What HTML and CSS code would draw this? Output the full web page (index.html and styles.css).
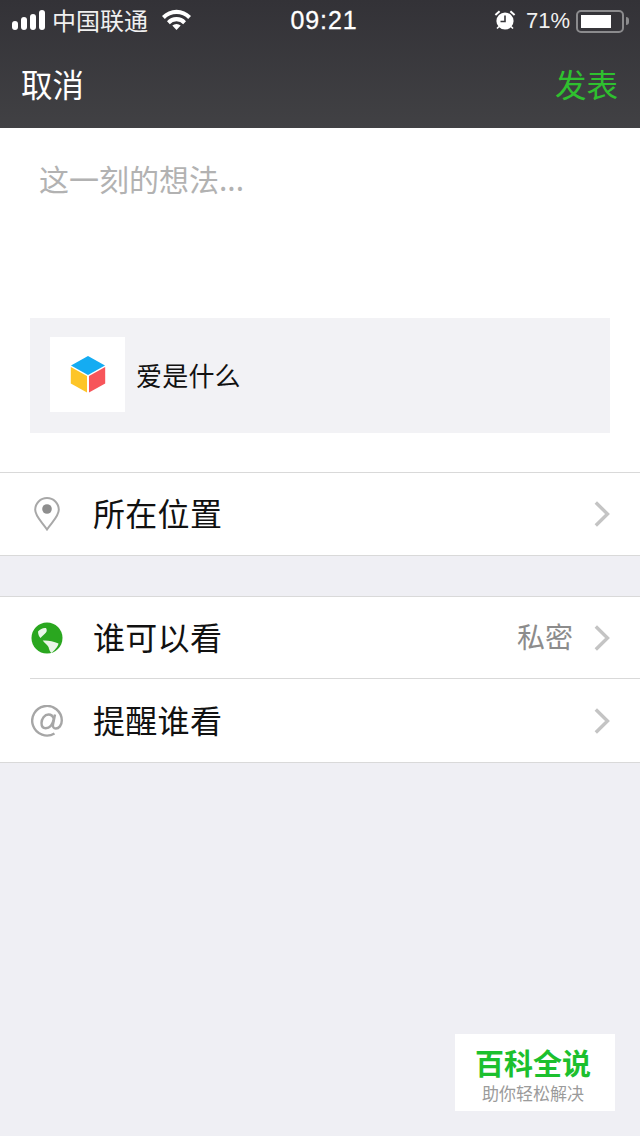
FILE: index.html
```html
<!DOCTYPE html>
<html lang="zh-CN">
<head>
<meta charset="utf-8">
<title>发表</title>
<link rel="stylesheet" href="styles.css">
</head>
<body>
<div class="phone">
  <header class="top">
    <div class="status">
      <div class="status-left">
        <div class="signal"><i class="b1"></i><i class="b2"></i><i class="b3"></i><i class="b4"></i></div>
        <span class="carrier">中国联通</span>
        <svg class="wifi" width="29" height="22" viewBox="0 0 29 22"><path d="M14.500 21 10.300 16.600A6 6 0 0 1 18.700 16.600Z" fill="#fff"/><path d="M5 12.200A13 13 0 0 1 24 12.200L21.200 15.200A9 9 0 0 0 7.800 15.200Z" fill="#fff"/><path d="M0 7A20.200 20.200 0 0 1 29 7L26.200 10A16 16 0 0 0 2.800 10Z" fill="#fff"/></svg>
      </div>
      <span class="clock">09:21</span>
      <div class="status-right">
        <svg class="alarm" width="22" height="22" viewBox="0 0 22 22"><circle cx="11" cy="12" r="8.600" fill="#fff"/><path d="M11 6.500V12.500H6.500" fill="none" stroke="#37363a" stroke-width="1.600"/><path d="M1.400 6 5.600 2.200M20.600 6 16.400 2.200" stroke="#fff" stroke-width="2" fill="none"/><path d="M3 19.500 5 17.500M19 19.500 17 17.500" stroke="#fff" stroke-width="1.600"/></svg>
        <span class="percent">71%</span>
        <div class="battery"><div class="battery-fill"></div></div>
        <div class="battery-cap"></div>
      </div>
    </div>
    <nav class="nav">
      <span class="cancel">取消</span>
      <span class="post">发表</span>
    </nav>
  </header>

  <section class="composer">
    <p class="placeholder">这一刻的想法...</p>
    <div class="link-card">
      <div class="thumb">
        <svg class="cube" width="36" height="38" viewBox="0 0 36 38"><path d="M18 1 35 10.500 18 20 1 10.500Z" fill="#14acf2"/><path d="M.8 12 17 21V37.500L.8 28.500Z" fill="#fdc528"/><path d="M35.200 12 19 21V37.500L35.200 28.500Z" fill="#f7555a"/></svg>
      </div>
      <span class="link-title">爱是什么</span>
    </div>
  </section>

  <ul class="group group-location">
    <li class="row">
      <span class="row-icon">
        <svg width="26" height="34" viewBox="0 0 26 34"><path d="M13 32.500C8 25 1.200 19.500 1.200 12.800a11.800 11.800 0 0 1 23.600 0C24.800 19.500 18 25 13 32.500Z" fill="none" stroke="#a8a8a8" stroke-width="2"/><circle cx="13" cy="12" r="4.800" fill="#8e8e8e"/></svg>
      </span>
      <span class="row-label">所在位置</span>
      <svg class="chevron" width="16" height="26" viewBox="0 0 16 26"><path d="M1.800 1.500 13.500 13 1.800 24.500" fill="none" stroke="#c4c4c4" stroke-width="3.400"/></svg>
    </li>
  </ul>

  <ul class="group group-share">
    <li class="row row-divided">
      <span class="row-icon">
        <svg width="32" height="32" viewBox="0 0 32 32"><circle cx="16" cy="16" r="15.500" fill="#2aa71f"/><path d="M7 9.500C9.500 7 12 5.500 15 6c1 1.500 1 3 0 4.500-2 2.500-3.500 3-5.500 5.500C8 14.500 7 12 7 9.500Z" fill="#e9f6e7"/><path d="M11.700 18.500C16 18 22 19 27.500 21.500c-.5 2-1.500 4.500-7 9.500-1.500-1-2.500-4-3-6C16 22.500 13.500 21 11.700 18.500Z" fill="#e9f6e7"/></svg>
      </span>
      <span class="row-label">谁可以看</span>
      <span class="row-value">私密</span>
      <svg class="chevron" width="16" height="26" viewBox="0 0 16 26"><path d="M1.800 1.500 13.500 13 1.800 24.500" fill="none" stroke="#c4c4c4" stroke-width="3.400"/></svg>
    </li>
    <li class="row">
      <span class="row-icon">
        <svg width="32" height="32" viewBox="0 0 32 32"><path d="M23.500 28.500A14.800 14.800 0 1 1 30.800 15.500c0 5-3 8-6 8-2.200 0-3.200-1.500-2.800-4L24 9.500" fill="none" stroke="#a6a6a6" stroke-width="2.400"/><path d="M22.800 14c-.8-3-2.800-4.500-5.300-4.500-4 0-7 4.500-7 8.500 0 3.300 1.700 5.300 4.200 5.300 3.500 0 6.800-3.500 8.100-9.300Z" fill="none" stroke="#a6a6a6" stroke-width="2.400"/></svg>
      </span>
      <span class="row-label">提醒谁看</span>
      <svg class="chevron" width="16" height="26" viewBox="0 0 16 26"><path d="M1.800 1.500 13.500 13 1.800 24.500" fill="none" stroke="#c4c4c4" stroke-width="3.400"/></svg>
    </li>
  </ul>

  <aside class="badge">
    <strong class="badge-name">百科全说</strong>
    <span class="badge-line">助你轻松解决</span>
  </aside>
</div>
</body>
</html>
```
FILE: styles.css
```css
* { box-sizing: border-box; }

html, body {
  margin: 0;
  padding: 0;
}

body {
  font-family: "Noto Sans CJK SC", "Liberation Sans", sans-serif;
  background: #efeff4;
}

.phone {
  position: relative;
  width: 640px;
  height: 1136px;
  overflow: hidden;
  background: #efeff4;
}

/* Dark header: status bar and navigation */
.top {
  height: 128px;
  background: linear-gradient(#333237, #414144);
  color: #fff;
}

.status {
  height: 42px;
  padding: 0 11px 0 12px;
  display: grid;
  grid-template-columns: 1fr auto 1fr;
  align-items: center;
}

.status-left,
.status-right {
  display: flex;
  align-items: center;
}

.status-right { justify-content: flex-end; }

.signal {
  display: flex;
  align-items: flex-end;
  gap: 3px;
  height: 20px;
  margin-bottom: 2px;
}

.signal i {
  display: block;
  width: 6px;
  background: #fff;
  border-radius: 3px;
}

.b1 { height: 9px; }
.b2 { height: 13px; }
.b3 { height: 16px; }
.b4 { height: 20px; }

.carrier {
  margin-left: 7px;
  padding-bottom: 3px;
  font-size: 24px;
  line-height: 30px;
  color: #f0f0f0;
}

.wifi { margin-left: 14px; margin-bottom: 2px; }

.clock {
  padding: 0 0 1px 7px;
  font-family: "Liberation Sans", sans-serif;
  font-size: 25px;
  font-weight: 400;
  letter-spacing: .9px;
  -webkit-text-stroke: .3px #fff;
}

.alarm { margin-top: -2px; }

.percent {
  margin-left: 10px;
  font-family: "Liberation Sans", sans-serif;
  font-size: 22px;
  color: #f0f0f0;
}

.battery {
  margin-left: 6px;
  width: 48px;
  height: 23px;
  padding: 3px;
  border: 2px solid #8b8b8d;
  border-radius: 5px;
}

.battery-fill {
  width: 30px;
  height: 100%;
  background: #fff;
}

.battery-cap {
  width: 3px;
  height: 8px;
  margin-left: 2px;
  background: #8b8b8d;
  border-radius: 0 3px 3px 0;
}

.nav {
  height: 86px;
  padding: 0 22px 4px 21px;
  display: flex;
  align-items: center;
  justify-content: space-between;
  font-size: 31.500px;
}

.post { color: #2fc02f; }

/* Post text area with shared link */
.composer {
  height: 344px;
  padding: 28px 30px 0;
  background: #fff;
}

.placeholder {
  margin: 0;
  height: 162px;
  padding-left: 9px;
  font-size: 30px;
  line-height: 44px;
  color: #b2b2b2;
}

.link-card {
  height: 115px;
  padding: 0 20px;
  display: flex;
  align-items: center;
  background: #f2f2f5;
}

.thumb {
  width: 75px;
  height: 75px;
  margin-top: -2px;
  padding-bottom: 2px;
  display: flex;
  align-items: center;
  justify-content: center;
  background: #fff;
}

.link-title {
  margin: -3px 0 0 11px;
  font-size: 26px;
  letter-spacing: .2px;
  color: #111;
}

/* Settings rows */
.group {
  margin: 0;
  padding: 0;
  list-style: none;
  background: #fff;
  border-top: 1px solid #d9d9d9;
  border-bottom: 1px solid #d9d9d9;
}

.group-share { margin-top: 40px; }

.row {
  height: 82px;
  padding: 0 30px;
  display: flex;
  align-items: center;
  position: relative;
}

.row-divided::after {
  content: "";
  position: absolute;
  left: 30px;
  right: 0;
  bottom: 0;
  height: 1px;
  background: #d9d9d9;
}

.group-share .row:last-child { height: 83px; }

.row-icon {
  width: 34px;
  display: flex;
  justify-content: center;
}

.row-label {
  margin-left: 29px;
  padding-bottom: 4px;
  font-size: 32px;
  letter-spacing: .3px;
  color: #111;
}

.row-value {
  margin-left: auto;
  margin-right: 21px;
  padding-bottom: 4px;
  font-size: 28px;
  color: #8c8c8c;
}

.chevron { margin-left: auto; }
.row-value + .chevron { margin-left: 0; }

/* Corner badge */
.badge {
  position: absolute;
  left: 455px;
  top: 1034px;
  width: 160px;
  height: 77px;
  padding: 14px 4px 0 0;
  display: flex;
  flex-direction: column;
  align-items: center;
  gap: 3px;
  background: #fff;
  font-family: "Liberation Sans", "Noto Sans CJK SC", sans-serif;
}

.badge-name {
  font-size: 29px;
  line-height: 34px;
  color: #1cc02e;
  font-weight: 700;
}

.badge-line {
  font-size: 17px;
  line-height: 20px;
  color: #9b9b9b;
}
```
